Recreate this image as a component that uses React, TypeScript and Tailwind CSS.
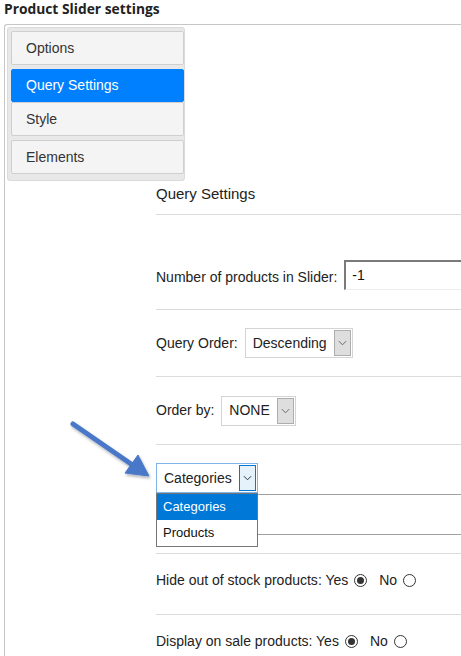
import React from "react";

function Chevron({ color = "#555" }: { color?: string }) {
  return (
    <svg viewBox="0 0 10 6" className="h-[6px] w-[9px]" aria-hidden="true">
      <path d="M1 1l4 4 4-4" fill="none" stroke={color} strokeWidth="1.1" />
    </svg>
  );
}

function Select({ value, focused = false }: { value: string; focused?: boolean }) {
  return (
    <div
      className={`flex h-[30px] items-stretch border bg-white ${
        focused ? "border-[#7eb4ea]" : "border-[#d4d4d4]"
      }`}
    >
      <span className="flex items-center pl-[7px] pr-[6px] text-[14px] text-[#222]">{value}</span>
      <span
        className={`m-px flex w-[17px] items-center justify-center border ${
          focused ? "border-[#0078d7] bg-[#e5f1fb]" : "border-[#adadad] bg-[#dedede]"
        }`}
      >
        <Chevron color={focused ? "#333" : "#666"} />
      </span>
    </div>
  );
}

function Radio({ checked }: { checked: boolean }) {
  return (
    <span className="inline-flex h-[13px] w-[13px] items-center justify-center rounded-full border border-[#333] bg-white">
      {checked ? <span className="h-[7px] w-[7px] rounded-full bg-[#333]" /> : null}
    </span>
  );
}

const tabs = [
  { label: "Options", active: false, gap: true },
  { label: "Query Settings", active: true, gap: false },
  { label: "Style", active: false, gap: true },
  { label: "Elements", active: false, gap: false },
];

function RadioRow({ label }: { label: string }) {
  return (
    <>
      <span>{label}: Yes</span>
      <span className="ml-[6px] mr-[12px] flex">
        <Radio checked />
      </span>
      <span>No</span>
      <span className="ml-[6px] flex">
        <Radio checked={false} />
      </span>
    </>
  );
}

export default function App() {
  return (
    <div
      className="relative h-[656px] w-[461px] overflow-hidden bg-white text-[#333]"
      style={{ fontFamily: '"Liberation Sans", Arial, sans-serif' }}
    >
      <div
        className="h-[24px] pl-[4px] text-[13.8px] font-bold leading-[18px] text-[#222]"
        style={{ fontFamily: '"Open Sans", "Noto Sans", sans-serif' }}
      >
        Product Slider settings
      </div>

      <div className="ml-[4px] h-[700px] w-[600px] rounded-tl-[3px] border-l border-t border-[#c6c6c6] pt-[2px]">
        {/* tabs */}
        <div className="ml-[2px] w-[178px] rounded-[3px] border border-[#dadada] bg-[#e8e8e8] pb-[6px] pl-[3px] pt-[3px]">
          {tabs.map((t) => (
            <div
              key={t.label}
              className={`flex items-center rounded-[2px] border pl-[14px] text-[14px] ${
                t.gap ? "mb-[4px]" : ""
              } ${
                t.active
                  ? "h-[33px] border-[#0080ff] bg-[#0080ff] text-white"
                  : "h-[34px] border-[#cfcfcf] bg-[#f4f4f4] text-[#333]"
              }`}
            >
              {t.label}
            </div>
          ))}
        </div>

        {/* settings */}
        <div className="ml-[151px]">
          <div className="h-[34px] border-b border-[#dcdcdc] pt-[3px] text-[15px] leading-[20px] text-[#222]">
            Query Settings
          </div>

          <div className="flex h-[95px] items-end border-b border-[#dcdcdc] pb-[19px]">
            <span className="mr-[7px] pb-[2px] text-[14px] text-[#222]">Number of products in Slider:</span>
            <div className="flex h-[30px] w-[200px] items-center border-b border-l-2 border-r border-t-2 border-b-[#eeeeee] border-l-[#7a7a7a] border-r-[#eeeeee] border-t-[#7a7a7a] pl-[6px] text-[14px] text-[#111]">
              -1
            </div>
          </div>

          <div className="flex h-[67px] items-center border-b border-[#dcdcdc]">
            <span className="mr-[7px] text-[14px] text-[#222]">Query Order:</span>
            <Select value="Descending" />
          </div>

          <div className="flex h-[68px] items-center border-b border-[#dcdcdc]">
            <span className="mr-[7px] text-[14px] text-[#222]">Order by:</span>
            <Select value="NONE" />
          </div>

          <div className="relative h-[109px] border-b border-[#dcdcdc] pt-[18px]">
            <div className="flex">
              <Select value="Categories" focused />
            </div>
            <div className="mt-px h-[41px] border-b border-t border-[#a0a0a0]" />
            <div className="absolute left-0 top-[48px] w-[102px] border border-[#767676] bg-white text-[13px]">
              <div className="flex h-[26px] items-center bg-[#0078d7] pl-[6px] text-white">Categories</div>
              <div className="flex h-[26px] items-center pl-[6px] text-[#111]">Products</div>
            </div>
          </div>

          <div className="flex h-[61px] items-center border-b border-[#dcdcdc] pb-[8px] text-[14px] text-[#222]">
            <RadioRow label="Hide out of stock products" />
          </div>

          <div className="flex h-[52px] items-center text-[14px] text-[#222]">
            <RadioRow label="Display on sale products" />
          </div>
        </div>
      </div>

      {/* annotation arrow */}
      <svg
        className="pointer-events-none absolute left-0 top-0"
        width="461"
        height="656"
        viewBox="0 0 461 656"
        aria-hidden="true"
      >
        <defs>
          <filter id="sh" x="-20%" y="-20%" width="140%" height="140%">
            <feDropShadow dx="1" dy="2" stdDeviation="1.5" floodColor="#000" floodOpacity="0.3" />
          </filter>
        </defs>
        <g filter="url(#sh)" fill="#4a78c8" stroke="#4a78c8">
          <line x1="73" y1="424" x2="134" y2="466" strokeWidth="5" strokeLinecap="round" />
          <polygon points="149,476 125,473 138,455" strokeWidth="1" strokeLinejoin="round" />
        </g>
      </svg>
    </div>
  );
}
